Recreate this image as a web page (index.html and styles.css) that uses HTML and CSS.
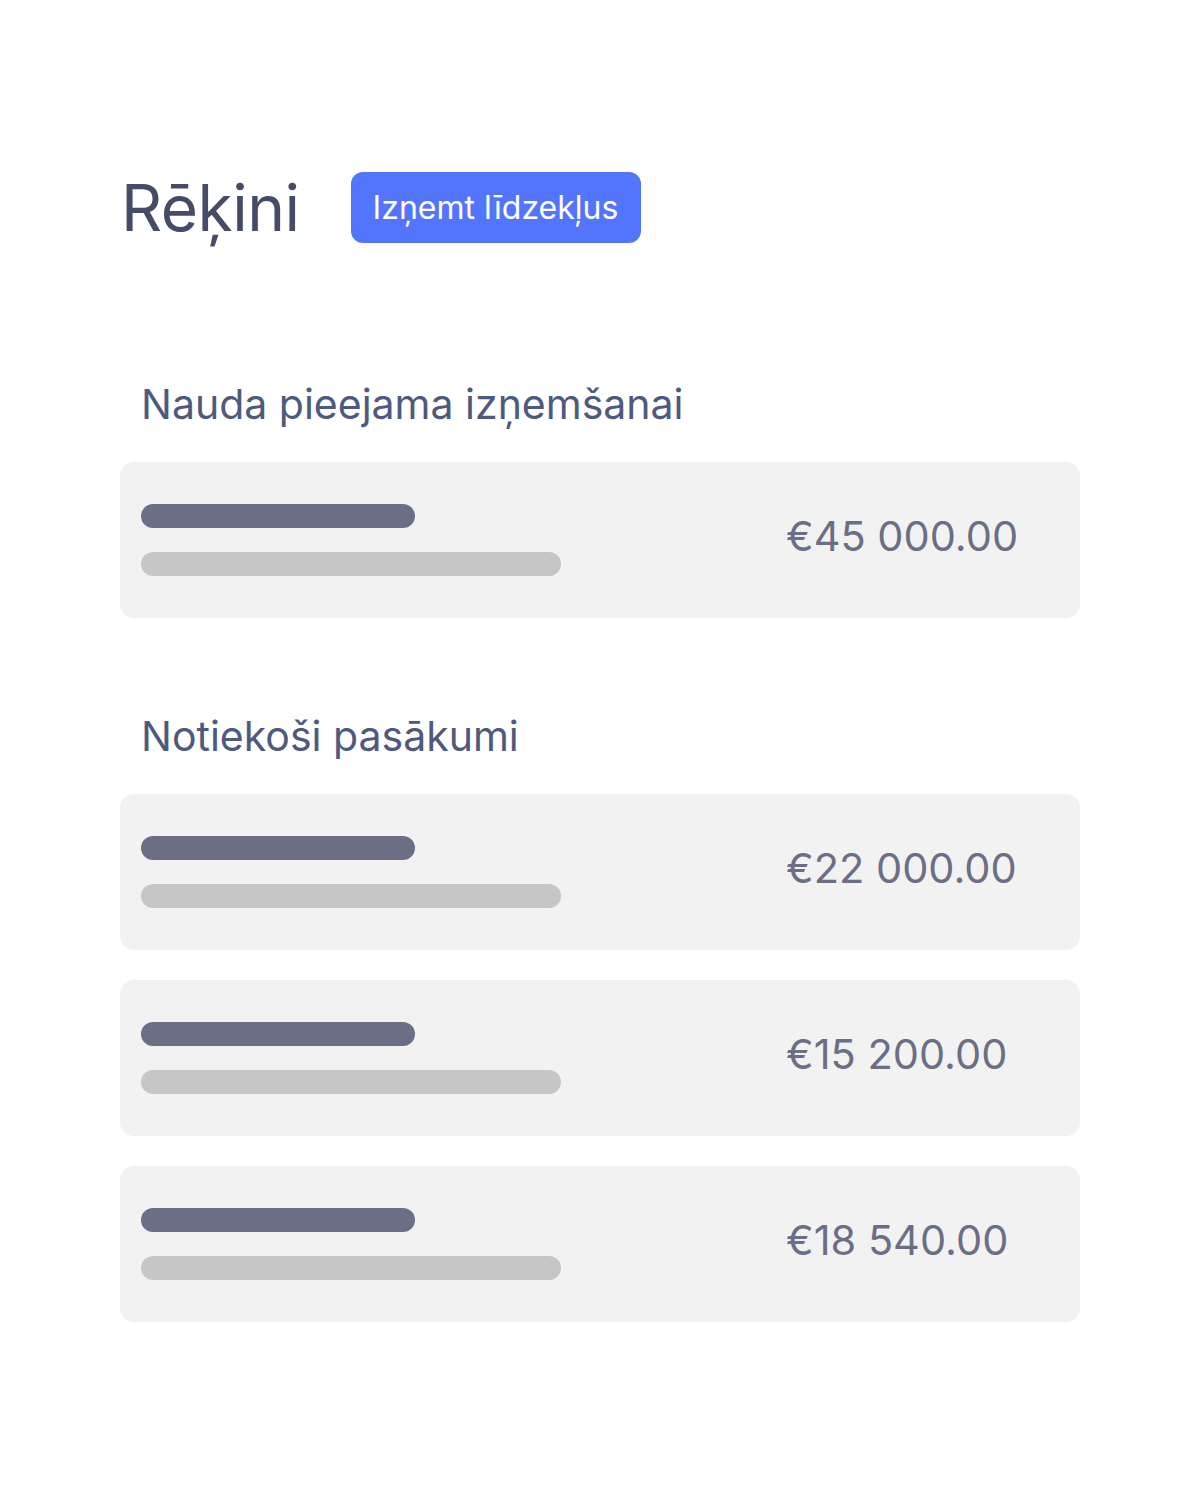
FILE: index.html
```html
<!DOCTYPE html>
<html lang="lv">
<head>
<meta charset="utf-8">
<title>Rēķini</title>
<link rel="stylesheet" href="styles.css">
</head>
<body>
<main class="page">
  <header class="header">
    <h1 class="title">Rēķini</h1>
    <button class="btn" type="button">Izņemt līdzekļus</button>
  </header>

  <section class="section section-first">
    <h2 class="section-title">Nauda pieejama izņemšanai</h2>
    <div class="cards">
      <div class="card">
        <div class="bars"><span class="bar bar-dark"></span><span class="bar bar-light"></span></div>
        <div class="amount">€45 000.00</div>
      </div>
    </div>
  </section>

  <section class="section section-second">
    <h2 class="section-title">Notiekoši pasākumi</h2>
    <div class="cards">
      <div class="card">
        <div class="bars"><span class="bar bar-dark"></span><span class="bar bar-light"></span></div>
        <div class="amount">€22 000.00</div>
      </div>
      <div class="card">
        <div class="bars"><span class="bar bar-dark"></span><span class="bar bar-light"></span></div>
        <div class="amount">€15 200.00</div>
      </div>
      <div class="card">
        <div class="bars"><span class="bar bar-dark"></span><span class="bar bar-light"></span></div>
        <div class="amount">€18 540.00</div>
      </div>
    </div>
  </section>
</main>
</body>
</html>
```

FILE: styles.css
```css
* { box-sizing: border-box; }
html, body { margin: 0; padding: 0; background: #ffffff; }
body { font-family: Inter, "Noto Sans", "DejaVu Sans", sans-serif; }

.page {
  width: 960px;
  margin-left: 120px;
  padding-top: 172px;
}

.header {
  display: flex;
  align-items: center;
  gap: 51px;
  height: 71px;
}

.title {
  margin: 0;
  font-size: 64px;
  font-weight: 400;
  line-height: 1;
  color: #464b68;
  letter-spacing: -0.5px;
  padding-left: 1px;
}

.btn {
  height: 71px;
  width: 290px;
  border: 0;
  border-radius: 12px;
  background: #5275fc;
  color: #ffffff;
  font-family: inherit;
  font-size: 32px;
  font-weight: 400;
  padding: 0;
}

.section-first { margin-top: 137px; }
.section-second { margin-top: 94px; }

.section-title {
  margin: 0 0 33px 21px;
  font-size: 41px;
  font-weight: 400;
  line-height: 1.2;
  color: #4f597d;
}

.cards {
  display: flex;
  flex-direction: column;
  gap: 30px;
}

.card {
  display: flex;
  align-items: center;
  justify-content: space-between;
  height: 156px;
  padding: 0 64px 0 21px;
  background: #f2f2f2;
  border-radius: 14px;
}

.bars {
  display: flex;
  flex-direction: column;
  gap: 24px;
}

.bar {
  display: block;
  height: 24px;
  border-radius: 12px;
}
.bar-dark { width: 274px; background: #6b6e85; }
.bar-light { width: 420px; background: #c6c6c6; }

.amount {
  width: 230px;
  white-space: nowrap;
  font-size: 41.5px;
  line-height: 1;
  color: #6b6e85;
  margin-top: -7px;
}
```
